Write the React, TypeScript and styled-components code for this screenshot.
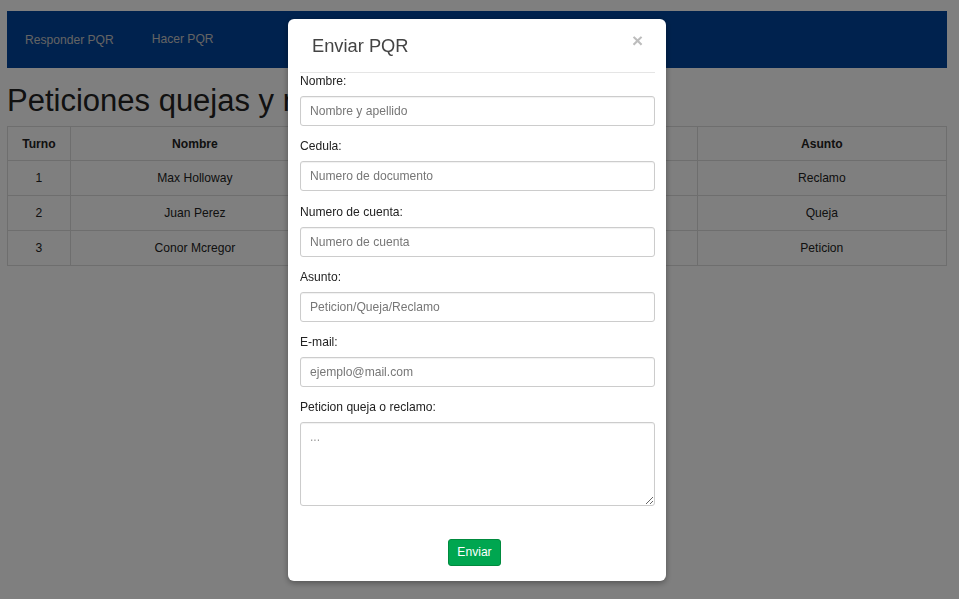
import { createGlobalStyle } from "styled-components";
import styled from "styled-components";

const GlobalStyle = createGlobalStyle`
  html, body {
    margin: 0;
    padding: 0;
    background: #ffffff;
    font-family: "Liberation Sans", Arial, Helvetica, sans-serif;
    color: #333333;
  }
`;

const Page = styled.div`
  padding: 11px 12px 0 7px;
`;

const Navbar = styled.nav`
  display: flex;
  align-items: center;
  height: 57px;
  background: #01459c;
  padding-left: 18px;
  gap: 38px;
`;

const NavLink = styled.a<{ $lift?: boolean }>`
  font-size: 12.1px;
  color: #c8c8c8;
  text-decoration: none;
  margin-top: ${(p) => (p.$lift ? "-2px" : "1px")};
`;

const Title = styled.h1`
  margin: 0;
  padding: 14px 0 6px;
  font-size: 31px;
  font-weight: 400;
  line-height: 38px;
  color: #222222;
`;

const Table = styled.table`
  width: 100%;
  border-collapse: collapse;
  font-size: 12.1px;
  color: #222;
`;

const Th = styled.th<{ $w: number }>`
  width: ${(p) => p.$w}px;
  height: 33px;
  padding: 0;
  border: 1px solid #dddddd;
  font-weight: 700;
  text-align: center;
`;

const Td = styled.td`
  height: 34px;
  padding: 0;
  border: 1px solid #dddddd;
  text-align: center;
`;

const Overlay = styled.div`
  position: fixed;
  inset: 0;
  background: rgba(0, 0, 0, 0.5);
`;

const Modal = styled.div`
  width: 378px;
  margin: 19px 0 0 288px;
  background: #fff;
  border-radius: 6px;
  box-shadow: 0 2px 6px rgba(0, 0, 0, 0.35);
  padding: 0 11px 15px 12px;
  box-sizing: border-box;
`;

const ModalHeader = styled.div`
  display: flex;
  align-items: center;
  justify-content: space-between;
  height: 53px;
  border-bottom: 1px solid #e5e5e5;
  padding: 0 12px 0 12px;
`;

const ModalTitle = styled.h4`
  margin: 0;
  padding-top: 1px;
  font-size: 18.3px;
  font-weight: 400;
  color: #444;
`;

const Close = styled.span`
  font-size: 19px;
  font-weight: 700;
  color: #bdbdbd;
  margin-top: -11px;
  line-height: 1;
`;

const Field = styled.div`
  display: flex;
  flex-direction: column;
  margin-bottom: 12.3px;
`;

const Label = styled.label`
  font-size: 12.1px;
  line-height: 16px;
  color: #222;
  margin-bottom: 7px;
`;

const Input = styled.input`
  height: 30px;
  box-sizing: border-box;
  border: 1px solid #cccccc;
  border-radius: 3px;
  padding: 0 9px;
  font-family: inherit;
  font-size: 12.1px;
  box-shadow: inset 0 1px 1px rgba(0, 0, 0, 0.06);
  &::placeholder {
    color: #777;
  }
`;

const TextArea = styled.textarea`
  height: 84px;
  box-sizing: border-box;
  border: 1px solid #cccccc;
  border-radius: 3px;
  padding: 7px 9px;
  font-family: inherit;
  font-size: 12.1px;
  box-shadow: inset 0 1px 1px rgba(0, 0, 0, 0.06);
  &::placeholder {
    color: #999;
  }
`;

const Footer = styled.div`
  display: flex;
  justify-content: center;
  padding-top: 20px;
  padding-right: 6px;
`;

const SendButton = styled.button`
  height: 27px;
  padding: 0 8px;
  border: 1px solid #008a3e;
  border-radius: 3px;
  background: #00a650;
  color: #fff;
  font-family: inherit;
  font-size: 12.1px;
`;

const rows = [
  { turno: 1, nombre: "Max Holloway", asunto: "Reclamo" },
  { turno: 2, nombre: "Juan Perez", asunto: "Queja" },
  { turno: 3, nombre: "Conor Mcregor", asunto: "Peticion" },
];

const fields = [
  { label: "Nombre:", placeholder: "Nombre y apellido" },
  { label: "Cedula:", placeholder: "Numero de documento" },
  { label: "Numero de cuenta:", placeholder: "Numero de cuenta" },
  { label: "Asunto:", placeholder: "Peticion/Queja/Reclamo" },
  { label: "E-mail:", placeholder: "ejemplo@mail.com" },
];

const App = () => {
  return (
    <>
      <GlobalStyle />
      <Page>
        <Navbar>
          <NavLink>Responder PQR</NavLink>
          <NavLink $lift>Hacer PQR</NavLink>
        </Navbar>
        <Title>Peticiones quejas y reclamos</Title>
        <Table>
          <thead>
            <tr>
              <Th $w={62}>Turno</Th>
              <Th $w={250}>Nombre</Th>
              <Th $w={189}>Cedula</Th>
              <Th $w={189}>Numero de cuenta</Th>
              <Th $w={250}>Asunto</Th>
            </tr>
          </thead>
          <tbody>
            {rows.map((r) => (
              <tr key={r.turno}>
                <Td>{r.turno}</Td>
                <Td>{r.nombre}</Td>
                <Td></Td>
                <Td></Td>
                <Td>{r.asunto}</Td>
              </tr>
            ))}
          </tbody>
        </Table>
      </Page>
      <Overlay>
        <Modal>
          <ModalHeader>
            <ModalTitle>Enviar PQR</ModalTitle>
            <Close>×</Close>
          </ModalHeader>
          {fields.map((f) => (
            <Field key={f.label}>
              <Label>{f.label}</Label>
              <Input placeholder={f.placeholder} />
            </Field>
          ))}
          <Field>
            <Label>Peticion queja o reclamo:</Label>
            <TextArea placeholder="..." />
          </Field>
          <Footer>
            <SendButton>Enviar</SendButton>
          </Footer>
        </Modal>
      </Overlay>
    </>
  );
};

export default App;
